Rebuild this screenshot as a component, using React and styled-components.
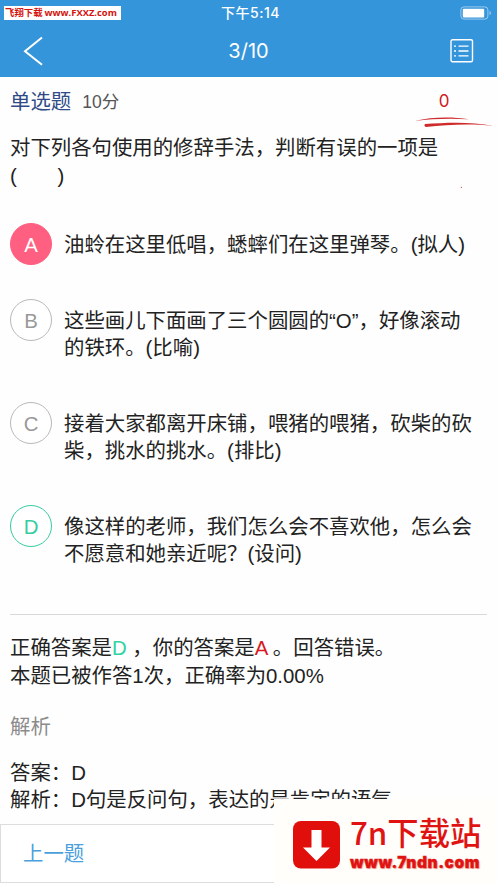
import styled, { createGlobalStyle } from "styled-components";

const GlobalStyle = createGlobalStyle`
  * {
    box-sizing: border-box;
  }

  body {
    margin: 0;
    background: #fff;
    font-family: "Liberation Sans", "Noto Sans CJK SC", sans-serif;
    text-spacing-trim: space-all;
    overflow: hidden;
  }
`;

const Screen = styled.div`
  position: relative;
  display: flex;
  flex-direction: column;
  width: 497px;
  height: 883px;
  overflow: hidden;
  background: #fefefe;
  color: #222;
  font-size: 20.4px;
  line-height: 27.5px;
`;

const Header = styled.header`
  flex: none;
  height: 77px;
  background: #3595da;
  color: #fff;
`;

const StatusBar = styled.div`
  display: grid;
  grid-template-columns: 1fr auto 1fr;
  align-items: center;
  height: 26px;
  padding: 0 5px 0 4px;
`;

const SiteTag = styled.span`
  justify-self: start;
  display: flex;
  align-items: center;
  gap: 2px;
  width: 117px;
  height: 14px;
  padding-left: 1px;
  background: #fff;
  color: #d5120c;
  font-family: "Open Sans", "Noto Sans CJK SC", sans-serif;
  font-size: 9.4px;
  font-weight: 700;
  line-height: 14px;
  white-space: nowrap;
`;

const Clock = styled.span`
  font-family: Inter, "Noto Sans CJK SC", sans-serif;
  font-size: 14px;
  font-weight: 500;
  line-height: 20px;
  letter-spacing: 0.5px;
  margin-left: 5px;
`;

const Battery = styled.svg`
  justify-self: end;
  margin-top: -1px;
`;

const NavBar = styled.div`
  display: grid;
  grid-template-columns: 1fr auto 1fr;
  align-items: center;
  height: 50px;
  padding: 0 23px;
`;

const PageCount = styled.span`
  padding-top: 2px;
  font-family: Inter, sans-serif;
  font-size: 20px;
  font-weight: 400;
`;

const ListIcon = styled.svg`
  justify-self: end;
`;

const Content = styled.main`
  flex: 1;
  min-height: 0;
  overflow: hidden;
  padding: 11px 10px 0;
`;

const TypeRow = styled.div`
  display: flex;
  align-items: center;
  height: 30px;
  gap: 11px;
`;

const TypeName = styled.span`
  color: #2f4a87;
`;

const Points = styled.span`
  color: #555;
  font-size: 17.5px;
`;

const Score = styled.div`
  position: absolute;
  top: 88px;
  right: 0;
  width: 84px;
  display: flex;
  flex-direction: column;
  align-items: center;
  color: #d0191d;
  font-family: Inter, sans-serif;
  font-size: 17px;
  line-height: 26px;

  span {
    margin-right: 22px;
  }
`;

const Question = styled.p`
  margin: 17px 0 0;
  white-space: pre;
`;

const Options = styled.div`
  display: flex;
  flex-direction: column;
  gap: 34px;
  margin-top: 33px;
`;

const Option = styled.div`
  display: flex;
  align-items: flex-start;
  gap: 12px;
`;

const tones = {
  wrong: { background: "#ff5f80", border: "#ff5f80", color: "#fff" },
  right: { background: "#fff", border: "#35cda0", color: "#35cda0" },
  plain: { background: "#fff", border: "#b9b9b9", color: "#999" },
};

const Letter = styled.span`
  flex: none;
  display: flex;
  align-items: center;
  justify-content: center;
  width: 42px;
  height: 42px;
  padding-top: 3px;
  border: 1px solid ${(p) => tones[p.$tone].border};
  border-radius: 50%;
  background: ${(p) => tones[p.$tone].background};
  color: ${(p) => tones[p.$tone].color};
`;

const OptionText = styled.span`
  padding: 8.5px 0 5.5px;
  white-space: pre;
`;

const Result = styled.div`
  margin-top: 40px;
  padding-top: 20px;
  border-top: 1px solid #d9d9d9;
  white-space: pre;
`;

const Mark = styled.span`
  color: ${(p) => p.$color};
`;

const SectionTitle = styled.h2`
  margin: 24px 0 0;
  color: #8b8b8b;
  font-size: 20.4px;
  font-weight: 400;
`;

const Analysis = styled.p`
  margin: 18px 0 0;
  white-space: pre;
`;

const Footer = styled.footer`
  flex: none;
  display: flex;
  align-items: center;
  height: 59px;
  padding: 2px 0 0 22px;
  border: 1px solid #ddd;
  background: #fff;
  color: #4c9fdc;
`;

const Promo = styled.div`
  position: absolute;
  right: 0;
  bottom: 0;
  display: flex;
  align-items: flex-start;
  gap: 10px;
  width: 223px;
  height: 84px;
  padding: 22px 0 0 19px;
  background: #fffefa;
  color: #e01313;
`;

const PromoText = styled.div`
  display: flex;
  flex-direction: column;
  margin-top: -12px;
  white-space: nowrap;
`;

const PromoName = styled.span`
  font-family: "Noto Sans CJK SC", sans-serif;
  font-size: 31.3px;
  font-weight: 500;
  line-height: 45px;
`;

const PromoUrl = styled.span`
  font-family: Inter, sans-serif;
  font-size: 15.5px;
  font-weight: 900;
  line-height: 18px;
  letter-spacing: 0.6px;
  -webkit-text-stroke: 0.4px #e01313;
  text-shadow: 1px 1px 1px #f3a9a0;
`;

const options = [
  { letter: "A", tone: "wrong", text: "油蛉在这里低唱，蟋蟀们在这里弹琴。(拟人)" },
  { letter: "B", tone: "plain", text: "这些画儿下面画了三个圆圆的“O”，好像滚动\n的铁环。(比喻)" },
  { letter: "C", tone: "plain", text: "接着大家都离开床铺，喂猪的喂猪，砍柴的砍\n柴，挑水的挑水。(排比)" },
  { letter: "D", tone: "right", text: "像这样的老师，我们怎么会不喜欢他，怎么会\n不愿意和她亲近呢？(设问)" },
];

export default function App() {
  return (
    <>
      <GlobalStyle />
      <Screen lang="zh-CN">
        <Header>
          <StatusBar>
            <SiteTag>
              <span>飞翔下载</span>
              <span>www.FXXZ.com</span>
            </SiteTag>
            <Clock>下午5:14</Clock>
            <Battery width="32" height="14" viewBox="0 0 32 14" fill="none">
              <rect x="0.9" y="0.9" width="27" height="12.2" rx="3" stroke="#fff" strokeOpacity="0.5" />
              <rect x="2.8" y="2.8" width="21.4" height="8.6" rx="1" fill="#fff" />
              <path d="M29.5 4.8c2 .9 2 3.5 0 4.4z" fill="#fff" fillOpacity="0.5" />
            </Battery>
          </StatusBar>
          <NavBar>
            <svg width="22" height="30" viewBox="0 0 22 30" fill="none" stroke="#fff" strokeWidth="2">
              <path d="M19 1.5L2 15.2L19 28.7" />
            </svg>
            <PageCount>3/10</PageCount>
            <ListIcon width="24" height="24" viewBox="0 0 24 24" fill="none" stroke="#fff" strokeWidth="1.4">
              <rect x="1" y="0.8" width="21.5" height="22" rx="1.5" />
              <path d="M8.5 7.1h10M8.5 12h10M8.5 16.9h10M4 7.1h2M4 12h2M4 16.9h2" />
            </ListIcon>
          </NavBar>
        </Header>

        <Content>
          <TypeRow>
            <TypeName>单选题</TypeName>
            <Points>10分</Points>
          </TypeRow>
          <Question>{"对下列各句使用的修辞手法，判断有误的一项是\n(\u3000\u3000)"}</Question>

          <Options>
            {options.map((o) => (
              <Option key={o.letter}>
                <Letter $tone={o.tone}>{o.letter}</Letter>
                <OptionText>{o.text}</OptionText>
              </Option>
            ))}
          </Options>

          <Result>
            正确答案是<Mark $color="#2fd3a5">D</Mark> ，你的答案是<Mark $color="#d8191d">A</Mark> 。回答错误。
            <br />
            本题已被作答1次，正确率为0.00%
          </Result>

          <SectionTitle>解析</SectionTitle>
          <Analysis>{"答案：D\n解析：D句是反问句，表达的是肯定的语气"}</Analysis>
        </Content>

        <Footer>上一题</Footer>

        <Score>
          <span>0</span>
          <svg width="84" height="76" viewBox="0 0 84 76" fill="#cf2b2b">
            <path d="M2 7C18 3 38 2.5 56 5.3C38 4.2 18 4.7 2 7z" />
            <path d="M12 10C32 8.5 58 7.3 80 11.8C58 9.3 34 10.5 13 13C11.5 13 11 10.5 12 10z" />
            <circle cx="48.3" cy="73.3" r="0.6" />
          </svg>
        </Score>

        <Promo>
          <svg width="47" height="48" viewBox="0 0 47 48">
            <rect x="0" y="0" width="47" height="47.5" rx="8" fill="#e00f0c" />
            <path d="M18.5 9h10v17.500h8.500L23.500 40L10 26.500h8.500z" fill="#fff" />
          </svg>
          <PromoText>
            <PromoName>7n下载站</PromoName>
            <PromoUrl>www.7ndn.com</PromoUrl>
          </PromoText>
        </Promo>
      </Screen>
    </>
  );
}
